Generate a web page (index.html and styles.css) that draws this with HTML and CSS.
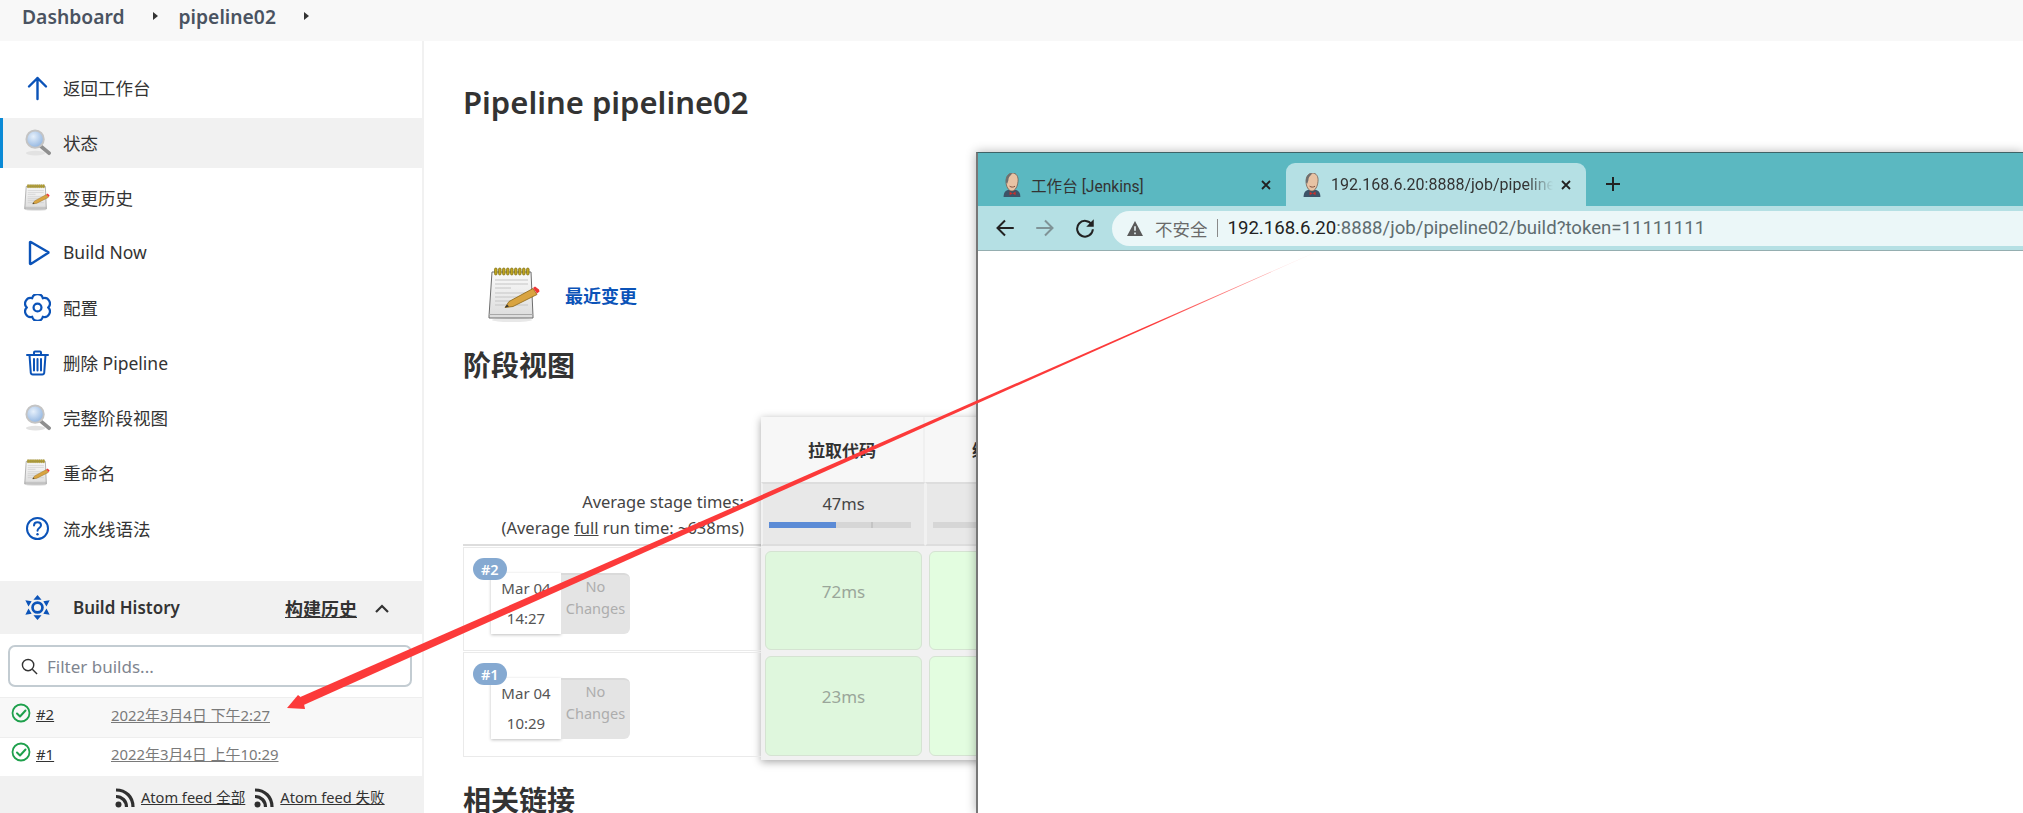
FILE: index.html
```html
<!DOCTYPE html>
<html lang="zh">
<head>
<meta charset="utf-8">
<title>pipeline02 [Jenkins]</title>
<link rel="stylesheet" href="styles.css">
</head>
<body>
<svg class="defs" aria-hidden="true">
  <defs>
    <radialGradient id="lens" cx="40%" cy="35%" r="70%"><stop offset="0" stop-color="#e6f0fb"/><stop offset="1" stop-color="#8db2df"/></radialGradient>
    <linearGradient id="paper" x1="0" y1="0" x2="0" y2="1"><stop offset="0" stop-color="#fafafa"/><stop offset="1" stop-color="#dcdcdc"/></linearGradient>
    <linearGradient id="taper" gradientUnits="userSpaceOnUse" x1="1316" y1="252" x2="1150" y2="325"><stop offset="0" stop-color="#fc3a3a" stop-opacity="0.25"/><stop offset="1" stop-color="#fc3a3a"/></linearGradient>
    <symbol id="magnifier" viewBox="0 0 28 28">
      <ellipse cx="12" cy="25" rx="10" ry="2.5" fill="#e2e2e2"/>
      <path d="M17 17.5l9 7.5" stroke="#8f8f8f" stroke-width="4" stroke-linecap="round"/>
      <circle cx="11.5" cy="10.5" r="9" fill="url(#lens)" stroke="#c4c4c4" stroke-width="2"/>
    </symbol>
    <symbol id="notepad" viewBox="0 0 54 55">
      <ellipse cx="24" cy="53" rx="20" ry="2" fill="#e8e8e8"/>
      <path d="M4 5h39l2 44v2H1v-2z" fill="url(#paper)" stroke="#6d6d6d" stroke-width="1"/>
      <path d="M1 47.5h44" stroke="#a8a8a8" stroke-width="1.2"/>
      <g fill="#bfa51f" stroke="#7a6a12" stroke-width=".7">
        <rect x="6.5" y="1" width="2.6" height="7" rx="1.3"/><rect x="10.5" y="1" width="2.6" height="7" rx="1.3"/><rect x="14.5" y="1" width="2.6" height="7" rx="1.3"/><rect x="18.5" y="1" width="2.6" height="7" rx="1.3"/><rect x="22.5" y="1" width="2.6" height="7" rx="1.3"/><rect x="26.5" y="1" width="2.6" height="7" rx="1.3"/><rect x="30.5" y="1" width="2.6" height="7" rx="1.3"/><rect x="34.5" y="1" width="2.6" height="7" rx="1.3"/><rect x="38.5" y="1" width="2.6" height="7" rx="1.3"/>
      </g>
      <path d="M7 13h33M7 17h33M7 21h16M7 26h33M7 30h33M7 34h16M7 38h33" stroke="#c6c6c6" stroke-width="1.2"/>
      <path d="M17 40.500l4-6 24-13 4 6-24 12z" fill="#d9a441" stroke="#8a6414" stroke-width=".8"/>
      <path d="M45 21l2-1.500 4 3 .5 2-2.500 2z" fill="#ef3535"/>
      <path d="M17 40.500l2-3 2 2z" fill="#333"/>
    </symbol>
    <symbol id="jenkins" viewBox="0 0 16 20">
      <path d="M1 20c0-4 2-6 5-6h4c3 0 5 2 5 6z" fill="#3c5468"/>
      <path d="M3 7c0-4 2-7 5.500-7 3 0 5 3 4.500 7-.3 4-2.300 8-5 8-3 0-5-4-5-8z" fill="#e8c3a4" stroke="#6b5347" stroke-width=".6"/>
      <path d="M3 8C2.500 3 5 0 8.500 0 7 2 5 3 5 6l-1 3z" fill="#6f6f6f"/>
      <path d="M6 11c1.500 1 3 1 4.500 0" stroke="#7a4a3a" stroke-width=".8" fill="none"/>
      <path d="M6 15.500l2.500 1.500 2.500-1.500v3l-2.500-1.500L6 18.500z" fill="#c9302c"/>
    </symbol>
    <symbol id="check" viewBox="0 0 20 20">
      <circle cx="10" cy="10" r="8.500" fill="none" stroke="#1ea04c" stroke-width="1.800"/>
      <path d="M6 10.500l3 3 5.500-6" fill="none" stroke="#1ea04c" stroke-width="2" stroke-linecap="round" stroke-linejoin="round"/>
    </symbol>
    <symbol id="rss" viewBox="0 0 20 20">
      <circle cx="3.500" cy="16.500" r="3" fill="#2f2f2f"/>
      <path d="M1 8.500c6 0 10.500 4.500 10.500 10.500M1 2c10 0 17 7 17 17" fill="none" stroke="#2f2f2f" stroke-width="3.200"/>
    </symbol>
  </defs>
</svg>

<header class="crumbs">
  <a class="crumb">Dashboard</a><span class="caret"></span>
  <a class="crumb">pipeline02</a><span class="caret"></span>
</header>

<div class="page">
  <aside class="side">
    <nav class="tasks">
      <a class="task"><svg class="ico" viewBox="0 0 27 27"><path d="M13.500 25V4M5 12.500l8.500-8.500 8.500 8.500" class="line"/></svg><span>返回工作台</span></a>
      <a class="task active"><svg class="ico"><use href="#magnifier"/></svg><span>状态</span></a>
      <a class="task"><svg class="ico"><use href="#notepad"/></svg><span>变更历史</span></a>
      <a class="task"><svg class="ico" viewBox="0 0 27 27"><path d="M6 3.500v21a.5.5 0 0 0 .8.400L24 14a.5.5 0 0 0 0-1L6.800 3a.5.5 0 0 0-.8.500z" class="line"/></svg><span>Build Now</span></a>
      <a class="task"><svg class="ico" viewBox="1 1 24 24"><path d="M8.250 4.770A4.900 4.900 0 0 1 17.750 4.770A4.900 4.900 0 0 1 22.500 13A4.900 4.900 0 0 1 17.750 21.230A4.900 4.900 0 0 1 8.250 21.230A4.900 4.900 0 0 1 3.500 13A4.900 4.900 0 0 1 8.250 4.770z" class="line thin"/><circle cx="13" cy="13" r="3.500" class="line thin"/></svg><span>配置</span></a>
      <a class="task"><svg class="ico" viewBox="0 0 27 27"><path d="M3 6h21M10 6V3.500a1 1 0 0 1 1-1h5a1 1 0 0 1 1 1V6M5.500 6l1.300 18a2 2 0 0 0 2 1.500h9.400a2 2 0 0 0 2-1.500L21.500 6M10 10v11.500M13.500 10v11.500M17 10v11.500" class="line thin"/></svg><span>删除 Pipeline</span></a>
      <a class="task"><svg class="ico"><use href="#magnifier"/></svg><span>完整阶段视图</span></a>
      <a class="task"><svg class="ico"><use href="#notepad"/></svg><span>重命名</span></a>
      <a class="task"><svg class="ico" viewBox="0 0 27 27"><circle cx="13.500" cy="13.500" r="10.500" class="line thin"/><path d="M10 10.500c0-2 1.500-3.300 3.500-3.300s3.500 1.300 3.500 3c0 2.800-3.500 2.800-3.500 5.500" class="line thin"/><circle cx="13.500" cy="19.300" r="1.200" class="dot"/></svg><span>流水线语法</span></a>
    </nav>

    <section class="history">
      <div class="history-head">
        <svg class="ico" viewBox="0 0 27 30"><circle cx="13.500" cy="15" r="5.500" class="line wide"/><path d="M13.500 1l4.500 5.500h-9zM13.500 29l4.500-5.500h-9zM0 7l7 1-3.500 6zM27 7l-7 1 3.500 6zM0 23l7-1-3.500-6zM27 23l-7-1 3.500-6z" class="dot"/></svg>
        <span class="history-title">Build History</span>
        <a class="history-link">构建历史</a>
        <svg class="chev" viewBox="0 0 16 10"><path d="M2 8l6-6 6 6"/></svg>
      </div>
      <div class="filter">
        <label class="search">
          <svg class="search-ico" viewBox="0 0 18 18"><circle cx="7.500" cy="7.500" r="6"/><path d="M12 12l5 5"/></svg>
          <span>Filter builds...</span>
        </label>
      </div>
      <div class="build alt"><svg class="check"><use href="#check"/></svg><a class="num">#2</a><a class="when">2022年3月4日 下午2:27</a></div>
      <div class="build"><svg class="check"><use href="#check"/></svg><a class="num">#1</a><a class="when">2022年3月4日 上午10:29</a></div>
      <div class="feeds">
        <svg class="rss"><use href="#rss"/></svg><a class="feed">Atom feed 全部</a>
        <svg class="rss"><use href="#rss"/></svg><a class="feed">Atom feed 失败</a>
      </div>
    </section>
  </aside>

  <main class="main">
    <h1 class="title">Pipeline pipeline02</h1>
    <div class="recent">
      <svg class="recent-ico"><use href="#notepad"/></svg>
      <a class="recent-link">最近变更</a>
    </div>
    <h2 class="heading">阶段视图</h2>

    <div class="stage">
      <div class="stage-left">
        <div class="avg">
          <div>Average stage times:</div>
          <div>(Average <u>full</u> run time: ~638ms)</div>
        </div>
        <div class="run">
          <span class="badge">#2</span>
          <div class="date"><div>Mar 04</div><div>14:27</div></div>
          <div class="nochange">No Changes</div>
        </div>
        <div class="run">
          <span class="badge">#1</span>
          <div class="date"><div>Mar 04</div><div>10:29</div></div>
          <div class="nochange">No Changes</div>
        </div>
      </div>
      <div class="stage-grid">
        <div class="col-head">拉取代码</div>
        <div class="col-head">编译代码</div>
        <div class="col-avg">47ms<div class="bar"><div class="bar-fill"></div><div class="bar-tick"></div></div></div>
        <div class="col-avg">50ms<div class="bar"></div></div>
        <div class="cell"><div class="cell-in">72ms</div></div>
        <div class="cell"><div class="cell-in pale">1s</div></div>
        <div class="cell last"><div class="cell-in">23ms</div></div>
        <div class="cell last"><div class="cell-in pale">1s</div></div>
      </div>
    </div>

    <h2 class="heading links">相关链接</h2>
  </main>
</div>

<div class="window">
  <div class="tabstrip">
    <div class="tab">
      <svg class="fav"><use href="#jenkins"/></svg>
      <span class="tab-text">工作台 [Jenkins]</span>
      <svg class="close" viewBox="0 0 10 10"><path d="M1 1l8 8M9 1l-8 8"/></svg>
    </div>
    <div class="tab current">
      <svg class="fav"><use href="#jenkins"/></svg>
      <span class="tab-text fade">192.168.6.20:8888/job/pipeline02/build?token=11111111</span>
      <svg class="close" viewBox="0 0 10 10"><path d="M1 1l8 8M9 1l-8 8"/></svg>
    </div>
    <svg class="plus" viewBox="0 0 16 16"><path d="M8 1v14M1 8h14"/></svg>
  </div>
  <div class="toolbar">
    <svg class="nav" viewBox="0 0 16 16"><path d="M15 8H2M8 2L2 8l6 6"/></svg>
    <svg class="nav off" viewBox="0 0 16 16"><path d="M1 8h13M8 2l6 6-6 6"/></svg>
    <svg class="nav" viewBox="0 0 16 16"><path d="M13.500 5.500A6.300 6.300 0 1 0 14.300 9"/><path class="nav-solid" d="M15 1v6H9z"/></svg>
    <div class="omnibox">
      <svg class="warn" viewBox="0 0 14 13"><path d="M7 0l7 13H0z"/><path class="warn-mark" d="M7 4.500v4M7 10v1.500"/></svg>
      <span class="insecure">不安全</span>
      <span class="sep"></span>
      <span class="url"><span class="host">192.168.6.20</span>:8888/job/pipeline02/build?token=11111111</span>
    </div>
  </div>
  <div class="viewport"></div>
</div>

<svg class="arrow" viewBox="0 0 2023 813" aria-hidden="true">
  <polygon fill="url(#taper)" points="1316,252 300.300,697.100 303.700,704.900"/>
  <polygon fill="#fc3a3a" points="287,708 298,695 303,699 305,709"/>
</svg>
</body>
</html>
```

FILE: styles.css
```css
* { box-sizing: border-box; }
html, body { height: 100%; }
body {
  margin: 0;
  overflow: hidden;
  background: #fff;
  color: #333;
  font-family: "Noto Sans", "Noto Sans CJK SC", sans-serif;
  font-size: 17px;
  display: flex;
  flex-direction: column;
  position: relative;
}
.defs { width: 0; height: 0; position: absolute; }

.crumbs {
  height: 41px;
  flex: none;
  background: #f8f8f8;
  display: flex;
  align-items: flex-start;
  padding: 3px 0 0 22px;
}
.crumb { font-weight: 600; font-size: 19.300px; line-height: 27px; color: #4a5361; }
.caret {
  width: 0; height: 0;
  margin: 9px 21px 0 28px;
  border-left: 5px solid #333;
  border-top: 4.500px solid transparent;
  border-bottom: 4.500px solid transparent;
}

.page { flex: 1; display: flex; min-height: 0; }

.side {
  width: 424px;
  flex: none;
  border-right: 2px solid #f1f1f1;
  padding-top: 22px;
  display: flex;
  flex-direction: column;
}
.tasks { display: flex; flex-direction: column; gap: 5.150px; }
.task {
  height: 50px;
  display: flex;
  align-items: center;
  gap: 12px;
  padding: 0 0 2px 24px;
  color: #333;
  font-size: 17.500px;
}
.task.active { background: #f1f1f1; box-shadow: inset 3px 0 0 #0a8ad6; }
.ico { width: 27px; height: 27px; flex: none; }
.line { fill: none; stroke: #0b53b8; stroke-width: 2.400; stroke-linecap: round; stroke-linejoin: round; }
.line.thin { stroke-width: 2; }
.line.wide { stroke-width: 3; }
.dot { fill: #0b53b8; }

.history { margin-top: 27px; }
.history-head {
  height: 53px;
  background: #f1f1f1;
  display: flex;
  align-items: center;
  padding-left: 24px;
}
.history-title { margin-left: 22px; font-weight: 600; font-size: 17px; color: #333; }
.history-link { margin-left: auto; font-weight: 600; font-size: 18px; color: #333; text-decoration: underline; }
.chev { width: 16px; height: 10px; margin: 2px 32px 0 17px; fill: none; stroke: #333; stroke-width: 2.200; }

.filter { padding: 11px 10px 10px 8px; }
.search {
  height: 42px;
  border: 2px solid #c3ccd2;
  border-radius: 7px;
  display: flex;
  align-items: center;
  gap: 9px;
  padding-left: 11px;
  color: #808590;
  font-size: 17px;
}
.search-ico { width: 17px; height: 17px; fill: none; stroke: #333; stroke-width: 1.500; }

.build {
  height: 39px;
  display: flex;
  align-items: center;
  border-top: 1px solid #eee;
  padding: 0 0 7px 11px;
  font-size: 14.900px;
}
.build.alt { background: #f8f8f8; height: 40px; }
.check { width: 20px; height: 20px; margin-top: -3px; flex: none; }
.num { margin-left: 5px; width: 75px; color: #333; text-decoration: underline; }
.when { color: #7a7a7a; text-decoration: underline; }

.feeds {
  height: 38px;
  background: #f1f1f1;
  display: flex;
  align-items: center;
  padding: 3px 0 0 115px;
  font-size: 14.600px;
}
.rss { width: 20px; height: 20px; flex: none; margin-top: 3px; }
.feed { margin: 0 9px 0 6px; color: #333; text-decoration: underline; }

.main { flex: 1; min-width: 0; padding: 39px 0 0 39px; overflow: hidden; }
.title { margin: 0; height: 44px; font-size: 31px; line-height: 44px; font-weight: 600; color: #333; }
.recent { display: flex; align-items: center; margin: 143px 0 0 25px; height: 55px; }
.recent-ico { width: 54px; height: 55px; }
.recent-link { margin-left: 23px; font-weight: 600; font-size: 18px; color: #0b53b8; }
.heading { margin: 23px 0 0; height: 40px; font-size: 28px; line-height: 40px; font-weight: 600; color: #333; }
.links { margin-top: 20px; }

.stage { display: flex; margin-top: 32px; height: 343px; }
.stage-left { width: 298px; flex: none; }
.avg {
  height: 129px;
  padding: 0 17px 3px 0;
  border-bottom: 2px solid #ddd;
  display: flex;
  flex-direction: column;
  justify-content: flex-end;
  text-align: right;
  font-size: 16.500px;
  line-height: 26px;
  color: #444;
}
.avg u { text-decoration: underline; }
.run {
  height: 104px;
  margin-top: 1px;
  border: 1px solid #eaeaea;
  border-right: 0;
  position: relative;
  display: flex;
  align-items: flex-start;
  padding: 25px 0 0 27px;
}
.run + .run { height: 105px; }
.badge {
  position: absolute;
  left: 9px;
  top: 10px;
  min-width: 32px;
  height: 22px;
  padding: 0 8px;
  border-radius: 11px;
  background: #85a9d1;
  color: #fff;
  font-weight: 600;
  font-size: 14.500px;
  line-height: 22px;
  text-align: center;
}
.date {
  width: 70px;
  height: 61px;
  background: #fff;
  box-shadow: 0 1px 3px rgba(0, 0, 0, .25);
  text-align: center;
  font-size: 15px;
  color: #555;
  line-height: 30px;
}
.nochange {
  width: 69px;
  height: 61px;
  background: #e4e4e4;
  border-top: 2px solid #dadada;
  border-radius: 0 6px 6px 0;
  text-align: center;
  font-size: 14.500px;
  line-height: 22px;
  color: #adadad;
  padding-top: 0;
}

.stage-grid {
  display: grid;
  grid-template-columns: 164px 164px;
  grid-template-rows: 65px 64px 105px 109px;
  width: 328px;
  height: 343px;
  background: #f1f1f1;
  box-shadow: 0 2px 8px rgba(0, 0, 0, .35);
}
.col-head {
  background: #f7f7f7;
  border-right: 2px solid #f0f0f0;
  display: flex;
  align-items: center;
  justify-content: center;
  font-weight: 600;
  font-size: 17px;
  color: #333;
}
.col-avg {
  background: #e8e8e8;
  border-top: 2px solid #ddd;
  border-left: 2px solid #f1f1f1;
  border-right: 1px solid #f1f1f1;
  border-bottom: 2px solid #ddd;
  text-align: center;
  font-size: 16.500px;
  line-height: 40px;
  color: #444;
}
.bar { height: 6px; background: #d6d6d6; position: relative; margin: -2px 13px 0 6px; }
.bar-fill { width: 67px; height: 6px; background: #5b8bd6; }
.bar-tick { position: absolute; left: 102px; top: 0; width: 2px; height: 6px; background: #c4c4c4; }
.cell { padding: 5px 3px 1px 4px; background: #f1f1f1; }
.cell.last { padding-bottom: 4px; }
.cell-in {
  height: 100%;
  background: #dff7dd;
  border: 1px solid #d5e3d2;
  border-radius: 6px;
  text-align: center;
  font-size: 17px;
  line-height: 80px;
  color: #9aa69a;
}
.cell-in.pale { background: #e3fde0; }

.window {
  position: absolute;
  left: 976px;
  top: 152px;
  right: 0;
  bottom: 0;
  background: #fff;
  border-left: 2px solid #777;
  border-top: 1px solid #3f6367;
  box-shadow: 0 0 10px rgba(0, 0, 0, .3);
  display: flex;
  flex-direction: column;
  font-family: Roboto, "Noto Sans CJK SC", sans-serif;
  z-index: 2;
}
.tabstrip {
  height: 53px;
  flex: none;
  background: #5bb8c1;
  display: flex;
  align-items: flex-end;
  padding-left: 8px;
}
.tab {
  width: 300px;
  height: 43px;
  display: flex;
  align-items: center;
  padding: 0 15px 0 16px;
  color: #333;
  font-size: 15.600px;
}
.tab.current { background: #b5e0e4; border-radius: 9px 9px 0 0; }
.fav { width: 20px; height: 24px; flex: none; margin-right: 9px; }
.tab-text { flex: 1; min-width: 0; white-space: nowrap; overflow: hidden; }
.tab-text.fade { font-size: 16px; -webkit-mask-image: linear-gradient(to right, #000 88%, transparent 100%); mask-image: linear-gradient(to right, #000 88%, transparent 100%); }
.close { width: 10px; height: 10px; flex: none; margin-left: 8px; fill: none; stroke: #222; stroke-width: 1.800; }
.plus { width: 16px; height: 16px; margin: 0 0 14px 19px; fill: none; stroke: #222; stroke-width: 2; }

.toolbar {
  height: 45px;
  flex: none;
  background: #b5e0e4;
  border-bottom: 1px solid #95aeb0;
  display: flex;
  align-items: center;
  padding-left: 17px;
}
.nav { width: 20px; height: 20px; flex: none; margin-right: 20px; fill: none; stroke: #222; stroke-width: 1.600; }
.nav.off { stroke: #7f9396; }
.nav-solid { fill: #222; stroke: none; }
.omnibox {
  flex: 1;
  height: 35px;
  margin-left: -3px;
  background: #ebf7f8;
  border-radius: 18px 0 0 18px;
  display: flex;
  align-items: center;
  padding-left: 15px;
  font-size: 18.600px;
  color: #5f6d70;
}
.warn { width: 16px; height: 15px; flex: none; fill: #5a5a5a; }
.warn-mark { stroke: #ebf7f8; stroke-width: 1.400; fill: none; }
.insecure { margin-left: 12px; font-size: 17.500px; color: #6a6a6a; }
.sep { width: 1px; height: 18px; background: #8a8a8a; margin: 0 10px 0 9px; }
.host { color: #222; }
.viewport { flex: 1; background: #fff; }

.arrow { position: absolute; left: 0; top: 0; width: 2023px; height: 813px; z-index: 3; pointer-events: none; }
```
